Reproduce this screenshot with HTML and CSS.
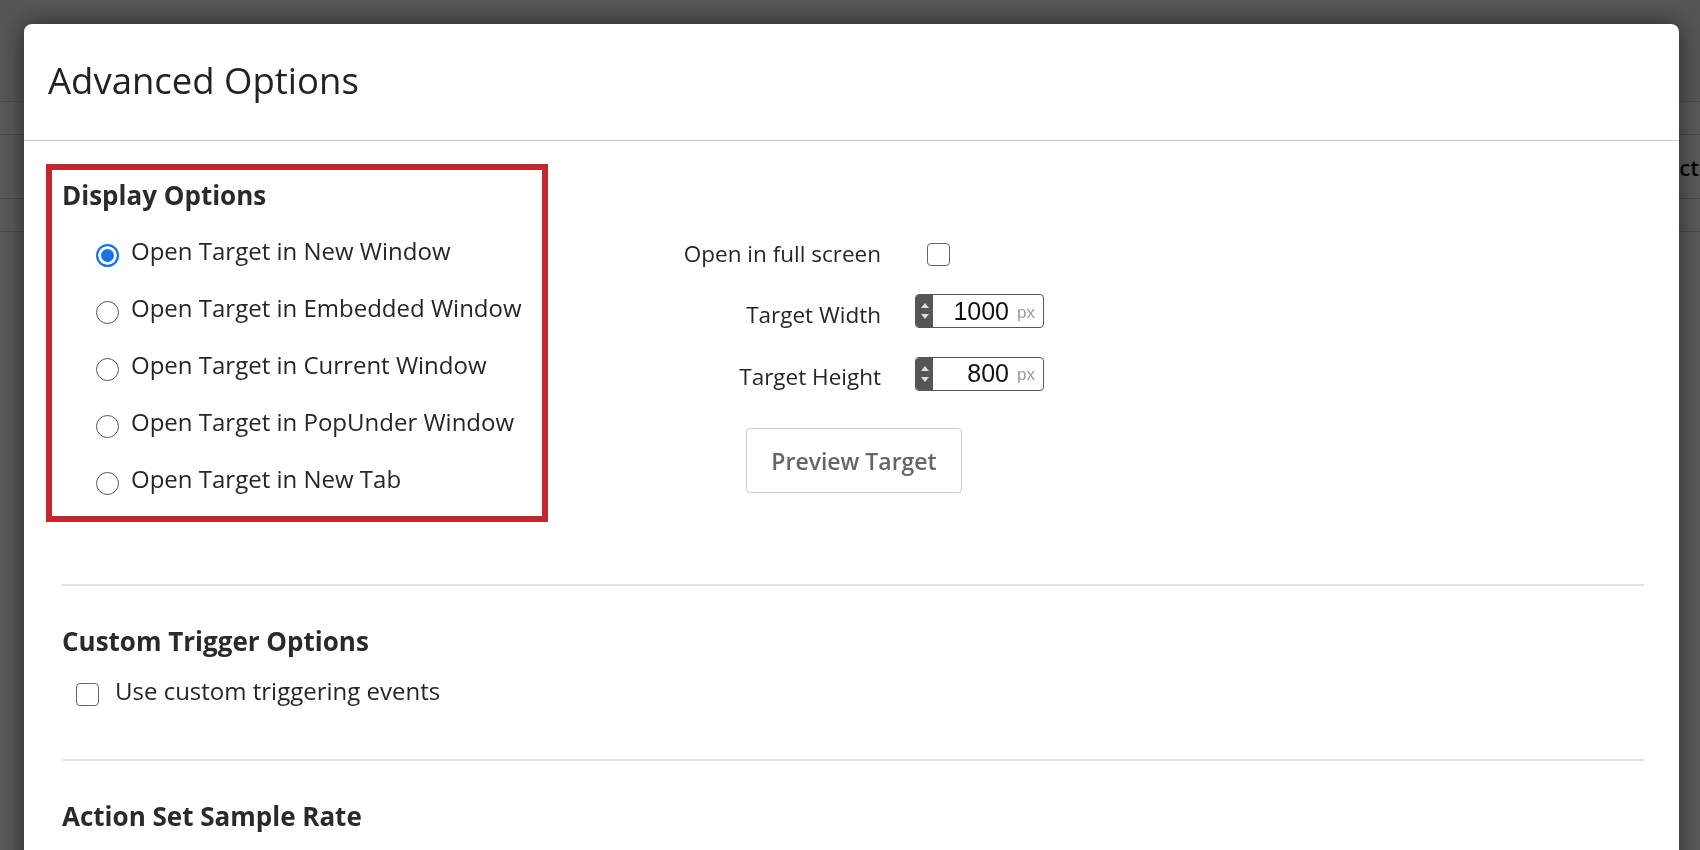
FILE: index.html
```html
<!DOCTYPE html>
<html lang="en">
<head>
    <meta charset="UTF-8">
    <meta name="viewport" content="width=device-width, initial-scale=1.0">
    <title>Advanced Options</title>
    <link rel="stylesheet" href="styles.css">
</head>
<body>
    <div class="page">
        <div class="pageTop"></div>
        <div class="pageRow thin"></div>
        <div class="pageRow"><span class="pageText">Select</span></div>
        <div class="pageRow thin"></div>
    </div>
    <div class="overlay"></div>

    <div class="modal">
        <div class="modalHeader">
            <h1>Advanced Options</h1>
        </div>

        <div class="modalBody">
            <div class="displayRow">
                <div class="displayBox">
                    <h2>Display Options</h2>
                    <div class="radioList">
                        <label class="radioRow"><input type="radio" name="target" checked> Open Target in New Window</label>
                        <label class="radioRow"><input type="radio" name="target"> Open Target in Embedded Window</label>
                        <label class="radioRow"><input type="radio" name="target"> Open Target in Current Window</label>
                        <label class="radioRow"><input type="radio" name="target"> Open Target in PopUnder Window</label>
                        <label class="radioRow"><input type="radio" name="target"> Open Target in New Tab</label>
                    </div>
                </div>

                <div class="sizeFields">
                    <div class="fieldLabel">Open in full screen</div>
                    <div><input type="checkbox" class="check fullScreen"></div>

                    <div class="fieldLabel numLabel">Target Width</div>
                    <div class="numField">
                        <div class="spinner"><span class="up"></span><span class="down"></span></div>
                        <div class="numValue">1000</div>
                        <div class="unit">px</div>
                    </div>

                    <div class="fieldLabel numLabel">Target Height</div>
                    <div class="numField">
                        <div class="spinner"><span class="up"></span><span class="down"></span></div>
                        <div class="numValue">800</div>
                        <div class="unit">px</div>
                    </div>

                    <button class="previewButton">Preview Target</button>
                </div>
            </div>

            <div class="section">
                <h2>Custom Trigger Options</h2>
                <label class="checkRow"><input type="checkbox" class="check"> Use custom triggering events</label>
            </div>

            <div class="section">
                <h2>Action Set Sample Rate</h2>
            </div>
        </div>
    </div>
</body>
</html>
```

FILE: styles.css
```css
body {
    margin: 0;
    height: 850px;
    overflow: hidden;
    font-family: 'Open Sans', 'Noto Sans', sans-serif;
    color: #262626;
    background-color: #fff;
}

/* page behind the dialog */
.page {
    position: fixed;
    top: 0;
    left: 0;
    right: 0;
    bottom: 0;
    background-color: #fff;
}

.pageTop {
    height: 101px;
    border-bottom: 1px solid #d6d6d6;
    background-color: #f6f6f6;
}

.pageRow {
    height: 63px;
    border-bottom: 1px solid #d6d6d6;
    display: flex;
    align-items: center;
    justify-content: flex-end;
}

.pageRow.thin {
    height: 32px;
}

.pageText {
    font-size: 22px;
    font-weight: 600;
    color: #111;
    margin-right: 1px;
}

.overlay {
    position: fixed;
    top: 0;
    left: 0;
    right: 0;
    bottom: 0;
    background-color: rgba(0, 0, 0, 0.65);
}

/* dialog */
.modal {
    position: relative;
    z-index: 2;
    margin: 24px 0 0 24px;
    width: 1655px;
    height: 900px;
    background-color: #fff;
    border-radius: 8px 8px 0 0;
    box-shadow: 0 0 22px rgba(0, 0, 0, 0.55);
}

.modalHeader {
    box-sizing: border-box;
    height: 117px;
    border-bottom: 1px solid #cbcbcb;
    display: flex;
    align-items: center;
    padding: 0 0 5px 24px;
}

h1 {
    margin: 0;
    font-size: 36.5px;
    font-weight: 400;
    color: #222;
}

h2 {
    margin: 0;
    font-size: 26px;
    line-height: 34px;
    font-weight: 700;
    color: #2a2a2a;
}

.modalBody {
    padding: 23px 35px 0 38px;
}

.displayRow {
    display: flex;
    align-items: flex-start;
}

.displayBox {
    box-sizing: border-box;
    width: 502px;
    margin-left: -16px;
    border: 6px solid #c1272d;
    padding: 8px 10px 9px;
}

.radioList {
    margin-top: 10px;
}

.radioRow {
    display: flex;
    align-items: center;
    gap: 12px;
    height: 57px;
    padding-left: 34px;
    font-size: 24px;
    line-height: 34px;
}

.radioRow input {
    appearance: none;
    flex: none;
    width: 23px;
    height: 23px;
    margin: 10px 0 0 0;
    border: 1.5px solid #555;
    border-radius: 50%;
    background-color: #fff;
}

.radioRow input:checked {
    border: 2px solid #1672ec;
    background-color: #1672ec;
    box-shadow: inset 0 0 0 3px #fff;
}

.check {
    appearance: none;
    width: 23px;
    height: 23px;
    margin: 0;
    border: 1.5px solid #666;
    border-radius: 4px;
    background-color: #fff;
}

/* width / height fields */
.sizeFields {
    display: grid;
    grid-template-columns: 200px auto;
    grid-template-rows: 34px 34px 45px auto;
    column-gap: 34px;
    row-gap: 23px;
    align-items: center;
    margin: 73px 0 0 133px;
}

.fieldLabel {
    text-align: right;
    font-size: 22.5px;
    line-height: 34px;
    white-space: nowrap;
}

.numLabel {
    padding-top: 7px;
}

.fullScreen {
    display: block;
    margin-left: 12px;
}

.numField {
    box-sizing: border-box;
    display: flex;
    align-items: center;
    width: 129px;
    height: 34px;
    border: 1.5px solid #555;
    border-radius: 4px;
    overflow: hidden;
}

.spinner {
    width: 17px;
    height: 100%;
    background-color: #555;
    display: flex;
    flex-direction: column;
    align-items: center;
    justify-content: center;
    gap: 6px;
}

.spinner span {
    width: 0;
    height: 0;
    border-left: 4px solid transparent;
    border-right: 4px solid transparent;
}

.spinner .up {
    border-bottom: 5px solid #dcdcdc;
}

.spinner .down {
    border-top: 5px solid #dcdcdc;
}

.numValue {
    flex: 1;
    text-align: right;
    font-family: 'Liberation Sans', Arial, sans-serif;
    font-size: 25px;
    color: #111;
}

.unit {
    font-family: 'Liberation Sans', Arial, sans-serif;
    font-size: 17px;
    color: #9a9a9a;
    padding: 3px 8px 0 8px;
}

.previewButton {
    grid-column: 1 / -1;
    justify-self: start;
    margin: 9px 0 0 65px;
    width: 216px;
    height: 65px;
    background-color: #fff;
    border: 1px solid #cdcdcd;
    border-radius: 4px;
    font-family: 'Open Sans', 'Noto Sans', sans-serif;
    font-size: 23px;
    font-weight: 600;
    color: #666;
}

/* lower sections */
.section {
    border-top: 2px solid #e2e2e2;
    padding-top: 38px;
    margin-top: 52px;
}

.displayRow + .section {
    margin-top: 62px;
}

.checkRow {
    display: flex;
    align-items: center;
    gap: 16px;
    height: 34px;
    margin-top: 15px;
    padding-left: 14px;
    font-size: 24px;
}

.checkRow .check {
    margin-top: 8px;
}
```
